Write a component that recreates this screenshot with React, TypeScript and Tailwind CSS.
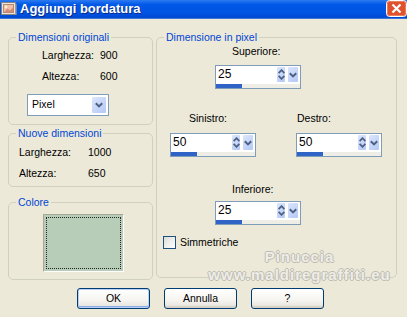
import React from "react";

const XpChevron: React.FC<{ className?: string }> = ({ className }) => (
  <svg width="8" height="6" viewBox="0 0 8 6" className={className}>
    <path d="M0.8 1.2 L4 4.4 L7.2 1.2" fill="none" stroke="#4D6185" strokeWidth="2" />
  </svg>
);

const UpDown: React.FC = () => (
  <div className="w-[10px] h-full rounded-[2px] border border-white bg-[linear-gradient(135deg,#DCE6FC,#B4C8F6)] flex flex-col items-center justify-center gap-[1px]">
    <svg width="7" height="5" viewBox="0 0 7 5">
      <path d="M0.6 4.2 L3.5 1.2 L6.4 4.2" fill="none" stroke="#4D6185" strokeWidth="1.8" />
    </svg>
    <svg width="7" height="5" viewBox="0 0 7 5">
      <path d="M0.6 0.8 L3.5 3.8 L6.4 0.8" fill="none" stroke="#4D6185" strokeWidth="1.8" />
    </svg>
  </div>
);

const DropButton: React.FC<{ className?: string }> = ({ className }) => (
  <div
    className={`rounded-[2px] border border-white bg-[linear-gradient(135deg,#DCE6FC,#B4C8F6)] flex items-center justify-center ${className ?? ""}`}
  >
    <XpChevron />
  </div>
);

const SpinBox: React.FC<{ value: string }> = ({ value }) => (
  <div className="w-[86px] h-[24px] border border-[#7F9DB9] bg-white flex flex-col">
    <div className="flex h-[17px]">
      <div className="flex-1 pl-[2px] text-[12px] leading-[17px]">{value}</div>
      <UpDown />
      <DropButton className="w-[12px] h-full ml-[1px] mr-[1px]" />
    </div>
    <div className="h-[1px]" />
    <div className="h-[4px] bg-[#EEEDE6]">
      <div className="w-[26px] h-full bg-[#2F63C6]" />
    </div>
  </div>
);

const Group: React.FC<{ label: string; className?: string; children?: React.ReactNode }> = ({
  label,
  className,
  children,
}) => (
  <fieldset className={`border border-[#D0D0BF] rounded-[5px] ${className ?? ""}`}>
    <legend className="ml-[7px] px-[2px] leading-[12px] text-[#0046D5]">{label}</legend>
    {children}
  </fieldset>
);

const XpButton: React.FC<{ label: string; isDefault?: boolean }> = ({ label, isDefault }) => (
  <button
    className={`w-[73px] h-[21px] rounded-[3px] border border-[#003C74] bg-[linear-gradient(180deg,#FFFFFF_0%,#F5F4EF_60%,#E3E1D8_100%)] text-black leading-[19px] ${
      isDefault ? "shadow-[inset_0_0_0_1px_#B9D1F7,inset_0_-1px_0_1px_#8AAAE8]" : "shadow-[inset_0_-2px_0_#D8D3C6]"
    }`}
  >
    {label}
  </button>
);

export default function App() {
  return (
    <div className="w-[407px] h-[317px] overflow-hidden bg-[#ECE9D8] font-['Liberation_Sans',Arial,sans-serif] text-[10.5px] text-black select-none">
      {/* title bar */}
      <div className="h-[19px] flex items-start bg-[linear-gradient(180deg,#2D7BF2_0%,#0058E6_25%,#0054E3_70%,#0048D0_100%)] border-b border-[#3E76D8]">
        <svg width="16" height="14" viewBox="0 0 16 14" className="ml-[1px] mt-[2px] shrink-0">
          <rect x="0.5" y="0.5" width="14" height="12" fill="#EFE7DD" stroke="#8A8478" />
          <rect x="2.5" y="2.5" width="10" height="8" fill="#F2BFA6" stroke="#B38A78" />
          <circle cx="5" cy="5" r="1.4" fill="#FFF3C8" />
          <path d="M3 10 L6.5 6.5 L9 8.5 L12 5.5 L12 10 Z" fill="#D88C78" />
          <rect x="14.5" y="2" width="1" height="11" fill="#B9B2A6" />
        </svg>
        <span className="ml-[3px] text-[13px] font-bold text-white leading-[18px] [text-shadow:1px_1px_0_#0A2A8A]">
          Aggiungi bordatura
        </span>
        <svg width="21" height="17" viewBox="0 0 21 17" className="ml-auto shrink-0">
          <rect x="0.5" y="0.5" width="20" height="16" rx="3" fill="#E0522C" stroke="#FFFFFF" />
          <rect x="1.5" y="1.5" width="18" height="14" rx="2" fill="none" stroke="#EE8A6A" strokeWidth="0.8" />
          <path d="M6.5 4.5 L14.5 12.5 M14.5 4.5 L6.5 12.5" stroke="#FFFFFF" strokeWidth="2.2" />
        </svg>
      </div>

      {/* body */}
      <div className="flex gap-[3px] pl-[8px] pt-[12px]">
        <div className="w-[145px] flex flex-col">
          <Group label="Dimensioni originali" className="h-[94px]">
            <div className="grid grid-cols-[58px_auto] gap-y-[7px] pl-[33px] pt-[5px] leading-[14px]">
              <span>Larghezza:</span>
              <span>900</span>
              <span>Altezza:</span>
              <span>600</span>
            </div>
            <div className="ml-[18px] mt-[11px] w-[82px] h-[22px] border border-[#7F9DB9] bg-white flex items-center">
              <span className="flex-1 pl-[4px]">Pixel</span>
              <DropButton className="w-[16px] h-[18px] mr-[1px]" />
            </div>
          </Group>

          <Group label="Nuove dimensioni" className="h-[60px] mt-[2px]">
            <div className="grid grid-cols-[69px_auto] gap-y-[7px] pl-[10px] pt-[6px] leading-[14px]">
              <span>Larghezza:</span>
              <span>1000</span>
              <span>Altezza:</span>
              <span>650</span>
            </div>
          </Group>

          <Group label="Colore" className="h-[84px] mt-[9px]">
            <div className="ml-[34px] mt-[6px] w-[81px] h-[58px] border border-t-[#A7A699] border-l-[#A7A699] border-r-white border-b-white bg-[#B8CDB7] p-[2px]">
              <div className="w-full h-full border border-dotted border-[#222]" />
            </div>
          </Group>
        </div>

        <Group label="Dimensione in pixel" className="w-[241px] h-[247px] relative">
          <div className="flex flex-col">
            <span className="ml-[75px] mt-[1px] leading-[14px]">Superiore:</span>
            <div className="ml-[58px] mt-[7px]">
              <SpinBox value="25" />
            </div>

            <div className="flex ml-[13px] mt-[22px] gap-[40px]">
              <div className="flex flex-col">
                <span className="ml-[19px] leading-[14px]">Sinistro:</span>
                <div className="mt-[8px]">
                  <SpinBox value="50" />
                </div>
              </div>
              <div className="flex flex-col">
                <span className="ml-[1px] leading-[14px]">Destro:</span>
                <div className="mt-[8px]">
                  <SpinBox value="50" />
                </div>
              </div>
            </div>

            <span className="ml-[75px] mt-[25px] leading-[14px]">Inferiore:</span>
            <div className="ml-[58px] mt-[5px]">
              <SpinBox value="25" />
            </div>

            <label className="flex items-center ml-[6px] mt-[11px] gap-[4px] leading-[13px]">
              <span className="w-[13px] h-[13px] border border-[#1C5180] bg-[linear-gradient(135deg,#DCDCD7,#FFFFFF)]" />
              <span>Simmetriche</span>
            </label>
          </div>

          {/* watermark */}
          <div className="absolute left-[51px] top-[205px] w-[183px] flex flex-col items-center font-bold text-[15px] leading-[17px] tracking-[1px] text-[#EEEDE7] [text-shadow:1px_0_#BEBCB2,-1px_0_#BEBCB2,0_1px_#BEBCB2,0_-1px_#BEBCB2]">
            <span>Pinuccia</span>
            <span className="mt-[1px] whitespace-nowrap">www.maldiregraffiti.eu</span>
          </div>
        </Group>
      </div>

      {/* buttons */}
      <div className="flex gap-[14px] pl-[77px] mt-[8px]">
        <XpButton label="OK" isDefault />
        <XpButton label="Annulla" />
        <XpButton label="?" />
      </div>
    </div>
  );
}
